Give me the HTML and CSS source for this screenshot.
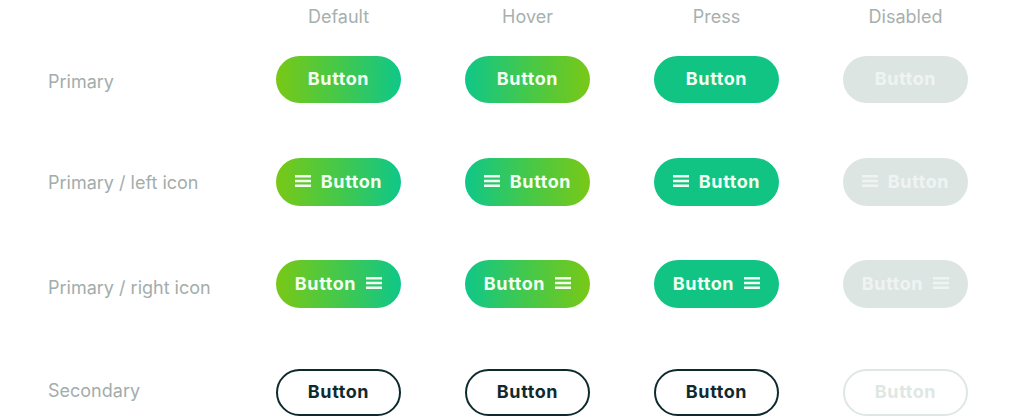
FILE: index.html
```html
<!DOCTYPE html>
<html lang="en">
<head>
    <meta charset="UTF-8">
    <title>Buttons</title>
    <link rel="stylesheet" href="styles.css">
</head>
<body>
    <div class="sheet">
        <div class="row row-head">
            <div class="label"></div>
            <div class="cell head">Default</div>
            <div class="cell head">Hover</div>
            <div class="cell head">Press</div>
            <div class="cell head">Disabled</div>
        </div>

        <div class="row row-1">
            <div class="label">Primary</div>
            <div class="cell"><span class="btn primary">Button</span></div>
            <div class="cell"><span class="btn primary hover">Button</span></div>
            <div class="cell"><span class="btn primary press">Button</span></div>
            <div class="cell"><span class="btn primary disabled">Button</span></div>
        </div>

        <div class="row row-2">
            <div class="label">Primary / left icon</div>
            <div class="cell"><span class="btn primary"><svg class="ico" viewBox="0 0 16 12"><path d="M0 1.2h16M0 6h16M0 10.8h16"/></svg>Button</span></div>
            <div class="cell"><span class="btn primary hover"><svg class="ico" viewBox="0 0 16 12"><path d="M0 1.2h16M0 6h16M0 10.8h16"/></svg>Button</span></div>
            <div class="cell"><span class="btn primary press"><svg class="ico" viewBox="0 0 16 12"><path d="M0 1.2h16M0 6h16M0 10.8h16"/></svg>Button</span></div>
            <div class="cell"><span class="btn primary disabled"><svg class="ico" viewBox="0 0 16 12"><path d="M0 1.2h16M0 6h16M0 10.8h16"/></svg>Button</span></div>
        </div>

        <div class="row row-3">
            <div class="label">Primary / right icon</div>
            <div class="cell"><span class="btn primary">Button<svg class="ico" viewBox="0 0 16 12"><path d="M0 1.2h16M0 6h16M0 10.8h16"/></svg></span></div>
            <div class="cell"><span class="btn primary hover">Button<svg class="ico" viewBox="0 0 16 12"><path d="M0 1.2h16M0 6h16M0 10.8h16"/></svg></span></div>
            <div class="cell"><span class="btn primary press">Button<svg class="ico" viewBox="0 0 16 12"><path d="M0 1.2h16M0 6h16M0 10.8h16"/></svg></span></div>
            <div class="cell"><span class="btn primary disabled">Button<svg class="ico" viewBox="0 0 16 12"><path d="M0 1.2h16M0 6h16M0 10.8h16"/></svg></span></div>
        </div>

        <div class="row row-4">
            <div class="label">Secondary</div>
            <div class="cell"><span class="btn secondary">Button</span></div>
            <div class="cell"><span class="btn secondary">Button</span></div>
            <div class="cell"><span class="btn secondary">Button</span></div>
            <div class="cell"><span class="btn secondary disabled">Button</span></div>
        </div>
    </div>
</body>
</html>
```

FILE: styles.css
```css
body {
    margin: 0;
    background: #ffffff;
    font-family: 'Inter', 'Noto Sans', sans-serif;
    overflow: hidden;
}

.sheet {
    padding-left: 48px;
}

.row {
    display: flex;
    align-items: center;
    height: 48px;
}

.row-head { height: 32px; }
.row-1 { margin-top: 24px; height: 47px; }
.row-2 { margin-top: 55px; }
.row-3 { margin-top: 54px; }
.row-4 { margin-top: 61px; height: 47px; }

.label {
    flex-shrink: 0;
    width: 228px;
    font-size: 18px;
    font-weight: 400;
    color: #a3adab;
}

.row-1 .label { padding-top: 4px; }
.row-3 .label { padding-top: 7px; }
.row-4 .label { padding-bottom: 5px; }

.cell {
    flex-shrink: 0;
    width: 189px;
}

.head {
    width: 125px;
    margin-right: 64px;
    text-align: center;
    font-size: 18px;
    color: #a7b0ae;
}

.btn {
    box-sizing: border-box;
    width: 125px;
    height: 47px;
    padding-bottom: 2px;
    display: flex;
    justify-content: center;
    align-items: center;
    gap: 10px;
    border-radius: 24px;
    font-size: 18px;
    font-weight: 700;
    letter-spacing: 0.6px;
}

.row-2 .btn, .row-3 .btn { height: 48px; }

.primary {
    background: linear-gradient(90deg, #79c816 0%, #45c84a 50%, #0fc789 100%);
    color: #f3fff0;
}

.primary.hover {
    background: linear-gradient(90deg, #0fc789 0%, #45c84a 50%, #79c816 100%);
}

.primary.press {
    background: #12c483;
}

.primary.disabled {
    background: #dde5e3;
    color: #eff4f3;
}

.secondary {
    border: 2px solid #0f2a2e;
    color: #0f2a2e;
    background: #ffffff;
}

.secondary.disabled {
    border-color: #dfe7e5;
    color: #dfe7e5;
}

.ico {
    width: 16px;
    height: 12px;
    stroke: currentColor;
    stroke-width: 2.7;
    fill: none;
}
```
